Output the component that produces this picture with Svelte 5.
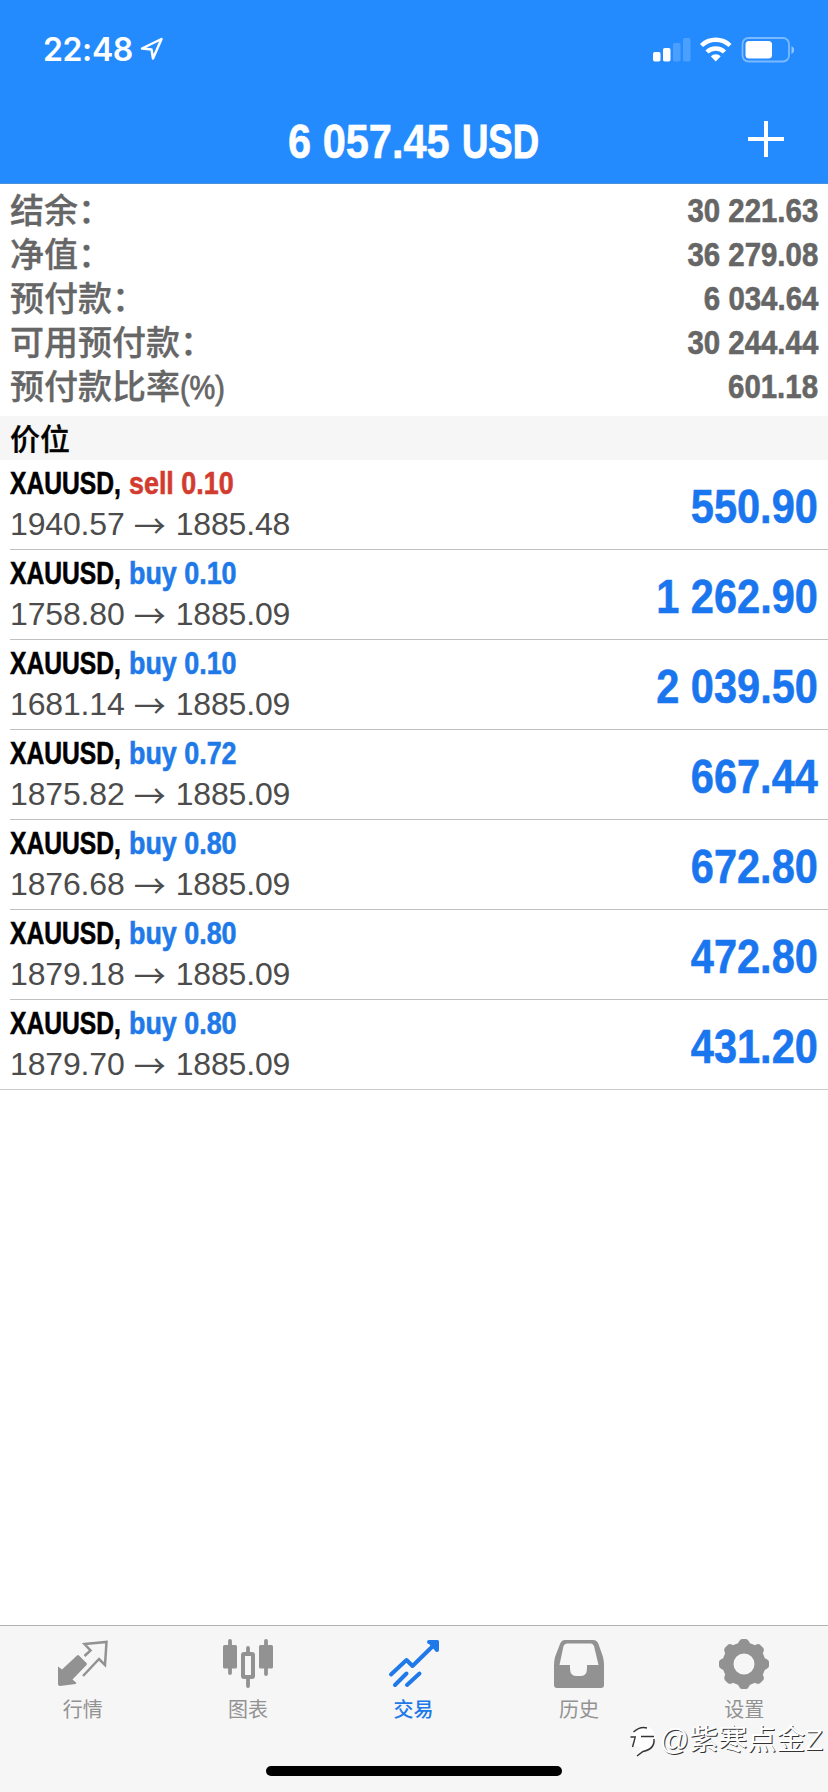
<script lang="ts">
	type Order = { side: 'buy' | 'sell'; lots: string; open: string; current: string; profit: string };

	const summary = [
		{ label: '结余：', value: '30 221.63' },
		{ label: '净值：', value: '36 279.08' },
		{ label: '预付款：', value: '6 034.64' },
		{ label: '可用预付款：', value: '30 244.44' },
		{ label: '预付款比率', unit: '(%)', value: '601.18' }
	];

	const orders: Order[] = [
		{ side: 'sell', lots: '0.10', open: '1940.57', current: '1885.48', profit: '550.90' },
		{ side: 'buy', lots: '0.10', open: '1758.80', current: '1885.09', profit: '1 262.90' },
		{ side: 'buy', lots: '0.10', open: '1681.14', current: '1885.09', profit: '2 039.50' },
		{ side: 'buy', lots: '0.72', open: '1875.82', current: '1885.09', profit: '667.44' },
		{ side: 'buy', lots: '0.80', open: '1876.68', current: '1885.09', profit: '672.80' },
		{ side: 'buy', lots: '0.80', open: '1879.18', current: '1885.09', profit: '472.80' },
		{ side: 'buy', lots: '0.80', open: '1879.70', current: '1885.09', profit: '431.20' }
	];

	const tabs = [
		{ id: 'quotes', label: '行情' },
		{ id: 'charts', label: '图表' },
		{ id: 'trade', label: '交易' },
		{ id: 'history', label: '历史' },
		{ id: 'settings', label: '设置' }
	];

	let active = 'trade';
</script>

<div class="app">
	<header>
		<div class="status">
			<div class="clock">
				<span class="time">22:48</span>
				<svg width="24" height="24" viewBox="0 0 24 24">
					<path d="M2 11.5 21.5 2 13 21.5 11.5 12.5Z" fill="none" stroke="#fff" stroke-width="2.5" stroke-linejoin="round" />
				</svg>
			</div>
			<svg class="indicators" width="144" height="28" viewBox="0 0 144 28" fill="#fff">
				<rect x="1" y="15" width="7.5" height="9.5" rx="1.8" />
				<rect x="11" y="11" width="7.5" height="13.5" rx="1.8" />
				<rect x="21" y="6" width="7.5" height="18.5" rx="1.8" opacity=".18" />
				<rect x="31" y="1" width="7.5" height="23.5" rx="1.8" opacity=".18" />
				<g fill="none" stroke="#fff" stroke-width="4.4">
					<path d="M49.5 8.5a20.5 20.5 0 0 1 28.5 0" />
					<path d="M55 15a12.5 12.5 0 0 1 17.5 0" />
				</g>
				<path d="M58.8 19.2a7.2 7.2 0 0 1 9.9 0L63.75 24.5Z" />
				<rect x="90.5" y="1" width="46.5" height="23.5" rx="6" fill="none" stroke="#fff" stroke-width="1.8" opacity=".4" />
				<rect x="93.5" y="4" width="26.5" height="17.5" rx="3.5" />
				<path d="M139.5 9v8c3.5-1.5 3.5-6.5 0-8Z" opacity=".5" />
			</svg>
		</div>
		<div class="titlebar">
			<h1><span class="total">6 057.45</span><span class="currency">USD</span></h1>
			<button class="add" aria-label="add">
				<svg width="36" height="36" viewBox="0 0 36 36">
					<path d="M18 0v36M0 18h36" stroke="#fff" stroke-width="4" />
				</svg>
			</button>
		</div>
	</header>

	<section class="summary">
		{#each summary as item}
			<div class="line">
				<span class="label">{item.label}</span>
				{#if item.unit}<span class="unit">{item.unit}</span>{/if}
				<span class="value">{item.value}</span>
			</div>
		{/each}
	</section>

	<h2>价位</h2>

	<ul class="orders">
		{#each orders as order}
			<li>
				<div class="order">
					<div class="info">
						<div class="name">
							<span class="symbol">XAUUSD,</span>
							<span class="side {order.side}">{order.side} {order.lots}</span>
						</div>
						<div class="prices">
							<span>{order.open}</span><span class="arrow">→</span><span>{order.current}</span>
						</div>
					</div>
					<span class="profit">{order.profit}</span>
				</div>
			</li>
		{/each}
	</ul>

	<footer>
		<nav>
			{#each tabs as tab}
				<button class="tab" class:active={tab.id === active} on:click={() => (active = tab.id)}>
					<svg width="52" height="52" viewBox="0 0 52 52" fill="currentColor">
						{#if tab.id === 'quotes'}
							<path d="M1 29.5 5 32.5 20 18.5Q21 17.5 22 18.5L29.5 26Q30.5 27 29.5 28L15.5 42.5 19.5 46 18.5 47 3 49Q1 49 1 47Z" />
							<path d="M27.5 19 33.5 13.5 27.5 7 49.5 5 48 28 42 22 26 39" fill="none" stroke="currentColor" stroke-width="2.5" />
						{:else if tab.id === 'charts'}
							<rect x="1" y="8" width="14" height="23.5" rx="1.5" />
							<path d="M8 4v32M26 11v5M26 42v7M44 4v33" stroke="currentColor" stroke-width="3.8" stroke-linecap="round" />
							<rect x="21" y="17" width="10" height="23" rx="1" fill="none" stroke="currentColor" stroke-width="4" />
							<rect x="37" y="8" width="14" height="23.5" rx="1.5" />
						{:else if tab.id === 'trade'}
							<g fill="none" stroke="currentColor" stroke-width="4" stroke-linecap="round">
								<path d="M3 37.5 18.5 23 24.5 29 48 6" stroke-linejoin="round" />
								<path d="M7 48 18.5 36.5M19 48 31.5 36.5" />
							</g>
							<path d="M41 3H49.5Q51 3 51 4.5V13Q51 15 49 15T46.5 13L41 7Q39 7 39 5T41 3Z" />
						{:else if tab.id === 'history'}
							<path
								fill-rule="evenodd"
								d="M12 3H40Q44 3 45.5 7L50 20Q51 24 51 28V48Q51 51 48 51H4Q1 51 1 48V28Q1 24 2 20L7 7Q8.5 3 12 3ZM14 6.5Q11.5 6.5 10.5 9L6.5 28H17V31Q17 39 23 39H28Q34 39 34 31V28H45.5L41 9Q40 6.5 38 6.5Z"
							/>
						{:else}
							<circle cx="26" cy="27" r="16" fill="none" stroke="currentColor" stroke-width="11" />
							{#each [0, 45, 90, 135, 180, 225, 270, 315] as angle}
								<path d="M17.5 9Q20 7.5 21 4.5 22 2 24 2H28Q30 2 31 4.5 32 7.5 34.5 9Z" transform="rotate({angle} 26 27)" />
							{/each}
						{/if}
					</svg>
					<span>{tab.label}</span>
				</button>
			{/each}
		</nav>
		<div class="home"></div>
		<div class="watermark">
			<svg width="30" height="34" viewBox="0 0 30 34" fill="none">
				<path d="M4 10C9 1 20 2 24 8c5 9-2 19-14 21l2-5C4 23 1 17 4 10Z" fill="#fff" />
				<path d="M4.5 9Q11 3 18 5M1.5 14H7M12 13.5H25M6 15 3.5 24M25 16Q26 26 14 28.5L8 33" stroke="#333" stroke-width="1.4" />
			</svg>
			<span>@紫寒点金Z</span>
		</div>
	</footer>
</div>

<style>
	:global(body) {
		margin: 0;
		background: #fff;
	}

	.app {
		display: flex;
		flex-direction: column;
		width: 828px;
		height: 1792px;
		overflow: hidden;
		background: #fff;
		font-family: 'Liberation Sans', 'Noto Sans CJK SC', sans-serif;
	}

	header {
		box-sizing: border-box;
		height: 184px;
		background: #248bff;
		border-bottom: 1px solid #4a90de;
		color: #fff;
	}

	.status {
		display: flex;
		justify-content: space-between;
		height: 96px;
		padding: 0 32px 0 43px;
	}

	.clock {
		display: flex;
		padding-top: 30px;
	}

	.time {
		width: 97px;
		font: 600 32px/40px Inter, sans-serif;
		letter-spacing: -0.4px;
	}

	.clock svg {
		margin-top: 7px;
	}

	.indicators {
		margin-top: 37px;
	}

	.titlebar {
		display: grid;
		grid-template-columns: 1fr auto 1fr;
		align-items: center;
		height: 85px;
		padding: 0 44px 0 41px;
	}

	h1 {
		grid-column: 2;
		display: flex;
		margin: 7px 0 0;
		font-size: 48px;
		line-height: 56px;
	}

	/* condensed bold face: glyphs are narrowed, box widths are the drawn ones */
	.total,
	.currency,
	.symbol,
	.side,
	.value,
	.profit {
		display: block;
		white-space: nowrap;
		font-weight: 700;
		transform-origin: left center;
		transform: scaleX(0.865);
		-webkit-text-stroke: 0.6px currentColor;
	}

	.total {
		width: 174px;
	}

	.currency {
		width: 76px;
		transform: scaleX(0.76);
		-webkit-text-stroke-width: 1px;
	}

	.add {
		justify-self: end;
		display: flex;
		padding: 0;
		border: 0;
		background: none;
	}

	.summary {
		padding: 4px 10px 8px;
		color: #666;
	}

	.line {
		display: flex;
		height: 44px;
		font-size: 34px;
		line-height: 44px;
	}

	.label,
	.unit {
		margin-top: 1px;
		font-weight: 500;
		-webkit-text-stroke: 0.3px currentColor;
	}

	.unit {
		transform-origin: left center;
		transform: scaleX(0.85);
		-webkit-text-stroke-width: 0.8px;
	}

	.value,
	.profit {
		margin-left: auto;
		transform-origin: right center;
	}

	h2 {
		height: 44px;
		margin: 0;
		padding-left: 10px;
		background: #f6f6f6;
		color: #000;
		font: 500 30px/42px 'Noto Sans CJK SC', sans-serif;
		-webkit-text-stroke: 0.3px currentColor;
	}

	.orders {
		margin: 0;
		padding: 0;
		list-style: none;
	}

	li {
		padding-left: 10px;
	}

	li:last-child {
		padding-left: 0;
	}

	.order {
		box-sizing: border-box;
		display: flex;
		height: 90px;
		padding-right: 10px;
		border-bottom: 1px solid #c0c0c0;
	}

	li:last-child .order {
		padding-left: 10px;
		border-color: #ccc;
	}

	.name {
		display: flex;
		height: 46px;
		font-size: 32px;
		line-height: 46px;
	}

	.symbol {
		width: 119px;
		color: #000;
		transform: scaleX(0.77);
	}

	.side {
		transform: scaleX(0.84);
	}

	.buy {
		color: #2079e8;
	}

	.sell {
		color: #d23c30;
	}

	.prices {
		display: flex;
		color: #4c4c4c;
		font-size: 32px;
		line-height: 36px;
		letter-spacing: -0.15px;
	}

	.arrow {
		width: 32px;
		margin: 0 10px 0 9px;
		font-family: 'Noto Sans CJK SC', sans-serif;
	}

	.profit {
		color: #1a76ee;
		font-size: 48px;
		line-height: 94px;
	}

	footer {
		position: relative;
		box-sizing: border-box;
		height: 167px;
		margin-top: auto;
		border-top: 1px solid #b2b2b2;
		background: #f6f6f6;
	}

	nav {
		display: flex;
		height: 140px;
		padding-right: 1px;
	}

	.tab {
		flex: 1;
		display: flex;
		flex-direction: column;
		align-items: center;
		padding: 11px 0 0;
		border: 0;
		background: none;
		color: #929292;
		font: 400 20px/24px 'Liberation Sans', 'Noto Sans CJK SC', sans-serif;
	}

	.tab span {
		margin-top: 9px;
	}

	.tab.active {
		color: #2079e8;
		font-weight: 500;
	}

	.home {
		width: 296px;
		height: 10px;
		margin: 0 auto;
		border-radius: 5px;
		background: #000;
	}

	/* embossed caption lying over the tab bar */
	.watermark {
		position: absolute;
		right: 5px;
		bottom: 34px;
		display: flex;
		align-items: center;
		gap: 1px;
		color: #fff;
		font: 400 29px/36px 'Liberation Sans', 'Noto Sans CJK SC', sans-serif;
		text-shadow: 1px 1px 0 #333;
	}
</style>
